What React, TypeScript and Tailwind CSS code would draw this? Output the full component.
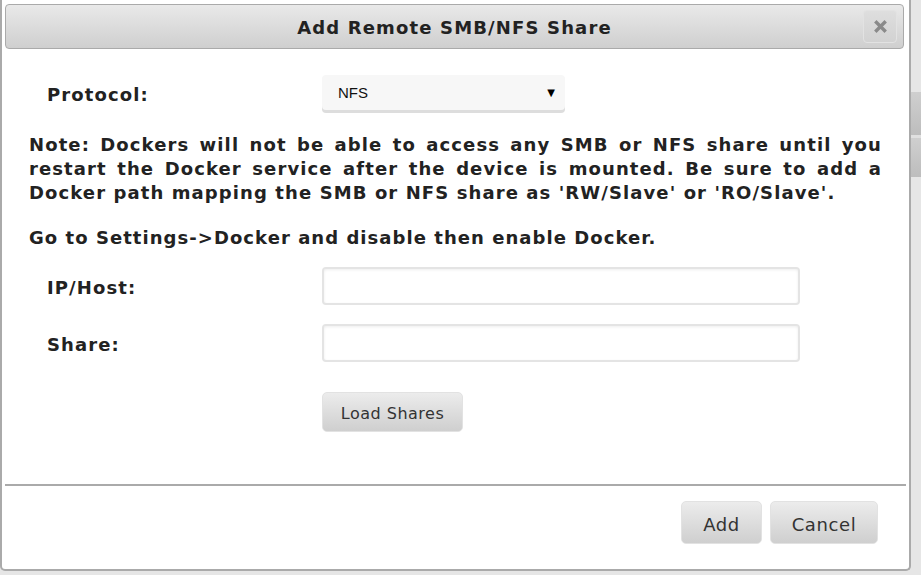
import React from 'react';

const body = '"DejaVu Sans", Verdana, sans-serif';

export default function App() {
  return (
    <div className="flex w-[921px] h-[575px] overflow-hidden bg-[#e6e6e6]" style={{ fontFamily: body }}>
      {/* Dialog */}
      <div className="flex flex-col w-[911px] h-[571px] bg-white border-x-2 border-b-2 border-[#aaaaaa] rounded-b-[5px] text-[#222]">
        {/* Title bar */}
        <div className="relative mt-[4px] ml-[3px] mr-[5px] h-[45px] flex items-center justify-center border border-[#aaaaaa] rounded-[4px] bg-gradient-to-b from-[#e9e9e9] to-[#cfcfcf]">
          <span className="text-[18px] font-bold tracking-[1.15px] pt-[2px]">Add Remote SMB/NFS Share</span>
          <button className="absolute right-[6px] top-[5px] w-[34px] h-[33px] flex items-center justify-center rounded-[4px] border border-[#e2e2e2] bg-gradient-to-b from-[#dedede] to-[#d2d2d2]">
            <svg width="13" height="13" viewBox="0 0 13 13">
              <path d="M2.5 2.5 L10.5 10.5 M10.5 2.5 L2.5 10.5" stroke="#8a8a8a" strokeWidth="3.4" strokeLinecap="square" />
            </svg>
          </button>
        </div>

        {/* Content */}
        <div className="flex-1 flex flex-col pl-[27px] pr-[27px]">
          <div className="flex items-center mt-[26px] h-[35px]">
            <label className="w-[293px] pl-[18px] pt-[3px] text-[18px] font-bold tracking-[1.1px]">Protocol:</label>
            <div className="relative w-[243px] h-[35px] rounded-[4px] bg-[#f7f7f7] shadow-[0_3px_0_#dddddd] flex items-center pl-[16px] pt-[2px]">
              <span className="text-[15px] text-[#111]" style={{ fontFamily: '"Liberation Sans", Arial, sans-serif' }}>NFS</span>
              <span className="absolute right-[10px] top-[10px] text-[10px] text-black">▼</span>
            </div>
          </div>

          <div className="mt-[23px] text-[18px] font-bold leading-[24px] tracking-[1.1px] text-justify">
            <div className="[text-align-last:justify]">Note: Dockers will not be able to access any SMB or NFS share until you</div>
            <div className="[text-align-last:justify]">restart the Docker service after the device is mounted. Be sure to add a</div>
            <div>Docker path mapping the SMB or NFS share as 'RW/Slave' or 'RO/Slave'.</div>
          </div>

          <div className="mt-[21px] text-[18px] font-bold leading-[24px] tracking-[1.05px]">
            Go to Settings-&gt;Docker and disable then enable Docker.
          </div>

          <div className="flex items-center mt-[17px]">
            <label className="w-[293px] pl-[18px] pt-[3px] text-[18px] font-bold tracking-[1.1px]">IP/Host:</label>
            <input className="w-[478px] h-[38px] rounded-[4px] border-2 border-[#e4e4e4] shadow-[inset_0_1px_3px_#eeeeee] bg-white outline-none" />
          </div>
          <div className="flex items-center mt-[19px]">
            <label className="w-[293px] pl-[18px] pt-[3px] text-[18px] font-bold tracking-[1.1px]">Share:</label>
            <input className="w-[478px] h-[38px] rounded-[4px] border-2 border-[#e4e4e4] shadow-[inset_0_1px_3px_#eeeeee] bg-white outline-none" />
          </div>

          <div className="flex mt-[30px] pl-[293px]">
            <button className="w-[141px] h-[40px] rounded-[5px] border border-[#e2e2e2] bg-gradient-to-b from-[#ececec] to-[#cfcfcf] pt-[3px] text-[16px] tracking-[0.5px] text-[#333]">
              Load Shares
            </button>
          </div>
        </div>

        {/* Footer */}
        <div className="mx-[3px] h-[2px] bg-[#aaaaaa]" />
        <div className="flex justify-end gap-[8px] pr-[31px] pt-[15px] h-[83px]">
          <button className="w-[81px] h-[43px] rounded-[5px] border border-[#e2e2e2] bg-gradient-to-b from-[#ececec] to-[#cfcfcf] pt-[3px] text-[18px] tracking-[0.5px] text-[#333]">
            Add
          </button>
          <button className="w-[108px] h-[43px] rounded-[5px] border border-[#e2e2e2] bg-gradient-to-b from-[#ececec] to-[#cfcfcf] pt-[3px] text-[18px] tracking-[0.6px] text-[#333]">
            Cancel
          </button>
        </div>
      </div>

      {/* Page behind, right edge */}
      <div className="flex-1 flex flex-col bg-[#e6e6e6]">
        <div className="h-[92px]" />
        <div className="h-[43px] bg-gradient-to-b from-[#cfcfcf] to-[#bdbdbd]" />
        <div className="h-[3px] bg-[#e0e0e0]" />
        <div className="h-[39px] bg-gradient-to-b from-[#cfcfcf] to-[#bdbdbd]" />
      </div>
    </div>
  );
}
